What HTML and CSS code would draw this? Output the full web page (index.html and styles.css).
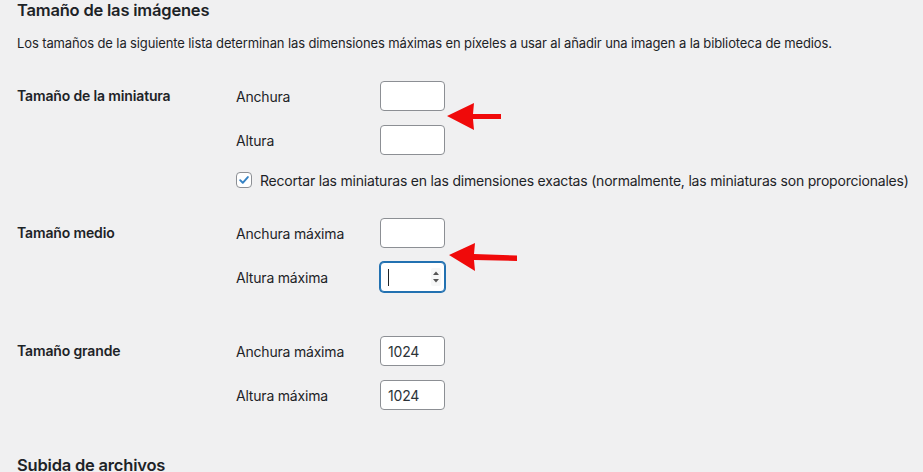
FILE: index.html
```html
<!DOCTYPE html>
<html lang="es">
<head>
<meta charset="utf-8">
<title>Ajustes de medios</title>
<link rel="stylesheet" href="styles.css">
</head>
<body>
<div class="page">
  <h2 class="title">Tamaño de las imágenes</h2>
  <p class="desc">Los tamaños de la siguiente lista determinan las dimensiones máximas en píxeles a usar al añadir una imagen a la biblioteca de medios.</p>

  <div class="setting group-thumb">
    <div class="th">Tamaño de la miniatura</div>
    <div class="td">
      <div class="field"><span class="flabel">Anchura</span><input class="num" type="text" value=""></div>
      <div class="field"><span class="flabel">Altura</span><input class="num" type="text" value=""></div>
      <div class="check-row">
        <span class="checkbox"><svg viewBox="0 0 16 16" width="16" height="16"><path d="M3.6 8.2 L6.6 11.2 L12.4 4.6" fill="none" stroke="#3582c4" stroke-width="2.2" stroke-linecap="round" stroke-linejoin="round"/></svg></span>
        <span class="check-label">Recortar las miniaturas en las dimensiones exactas (normalmente, las miniaturas son proporcionales)</span>
      </div>
    </div>
  </div>

  <div class="setting group-medium">
    <div class="th">Tamaño medio</div>
    <div class="td">
      <div class="field"><span class="flabel">Anchura máxima</span><input class="num" type="text" value=""></div>
      <div class="field"><span class="flabel">Altura máxima</span>
        <div class="num focused">
          <span class="caret"></span>
          <svg class="spinner" viewBox="0 0 10 18" width="10" height="18"><path d="M2 7 L5 3.5 L8 7 Z" fill="#555"/><path d="M2 11 L5 14.5 L8 11 Z" fill="#555"/></svg>
        </div>
      </div>
    </div>
  </div>

  <div class="setting group-large">
    <div class="th">Tamaño grande</div>
    <div class="td">
      <div class="field"><span class="flabel">Anchura máxima</span><input class="num" type="text" value="1024"></div>
      <div class="field"><span class="flabel">Altura máxima</span><input class="num" type="text" value="1024"></div>
    </div>
  </div>

  <h2 class="title sub">Subida de archivos</h2>

  <svg class="arrow arrow-1" width="60" height="30" viewBox="0 0 60 30"><polygon points="1,14 28,1 27,12 55,12 55,17 27,17 28,28" fill="#f00a0a"/></svg>
  <svg class="arrow arrow-2" width="76" height="32" viewBox="0 0 76 32"><polygon points="1,13 27,1 26,12 69,13.5 69,19 26,18 27,29" fill="#f00a0a"/></svg>
</div>
</body>
</html>
```
FILE: styles.css
```css
html, body {
  margin: 0;
  padding: 0;
  background: #f0f0f1;
}
body {
  font-family: Inter, "Liberation Sans", sans-serif;
  color: #1d2327;
  font-size: 13px;
}
.page {
  position: relative;
  padding: 0 0 0 17px;
  height: 472px;
  overflow: hidden;
}
.title {
  margin: 0;
  font-size: 16.5px;
  letter-spacing: -0.2px;
  font-weight: 600;
  line-height: 20px;
}
.title.sub {
  margin-top: 48px;
  line-height: 14px;
}
.desc {
  margin: 13px 0 0;
  font-size: 13px;
  letter-spacing: -0.12px;
  line-height: 20px;
}
.setting {
  display: flex;
}
.group-thumb { margin-top: 28px; }
.group-medium { margin-top: 28px; }
.group-large { margin-top: 44px; }
.th {
  width: 219px;
  font-weight: 600;
  font-size: 14px;
  letter-spacing: -0.15px;
  line-height: 30px;
}
.td {
  display: flex;
  flex-direction: column;
  gap: 14px;
}
.field {
  display: flex;
  align-items: center;
  height: 30px;
}
.flabel {
  width: 144px;
  font-size: 14px;
  letter-spacing: -0.2px;
}
.num {
  box-sizing: border-box;
  width: 65px;
  height: 30px;
  border: 1px solid #8c8f94;
  border-radius: 4px;
  background: #fff;
  padding: 0 7px;
  font-family: inherit;
  font-size: 14px;
  letter-spacing: -0.2px;
  color: #2c3338;
  margin: 0;
  outline: none;
}
.num.focused {
  display: flex;
  align-items: center;
  justify-content: space-between;
  border-color: #2271b1;
  box-shadow: 0 0 0 1px #2271b1;
  padding: 0 3px 0 7px;
}
.caret {
  width: 1px;
  height: 17px;
  background: #1d2327;
}
.spinner {
  background: #f6f7f7;
  border-radius: 2px;
}
.check-row {
  display: flex;
  align-items: center;
  height: 20px;
  margin-top: 1px;
  white-space: nowrap;
}
.checkbox {
  box-sizing: border-box;
  flex: none;
  width: 16px;
  height: 16px;
  border: 1px solid #8c8f94;
  border-radius: 4px;
  background: #fff;
  display: flex;
  align-items: center;
  justify-content: center;
  margin-right: 8px;
}
.checkbox svg { display: block; width: 14px; height: 14px; }
.check-label {
  font-size: 14px;
  letter-spacing: -0.2px;
}
.arrow {
  position: absolute;
}
.arrow-1 { left: 446px; top: 102px; }
.arrow-2 { left: 448px; top: 242px; }
```
